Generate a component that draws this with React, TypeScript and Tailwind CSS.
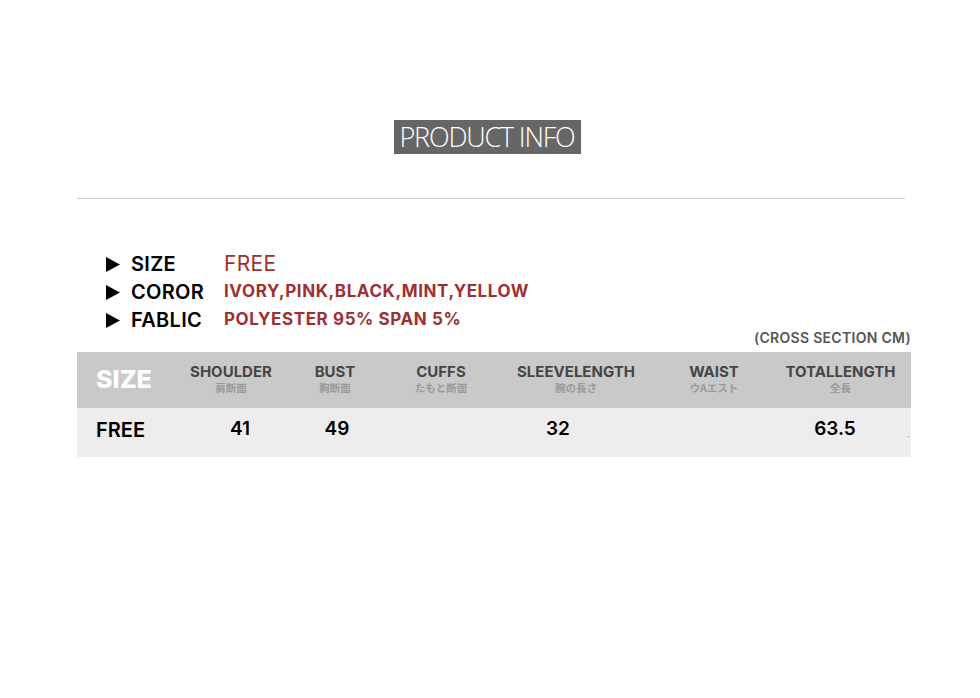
import React from 'react';

const headers = [
  { en: 'SHOULDER', jp: '肩断面', w: 'w-[102px]' },
  { en: 'BUST', jp: '胸断面', w: 'w-[106px]' },
  { en: 'CUFFS', jp: 'たもと断面', w: 'w-[106px]' },
  { en: 'SLEEVELENGTH', jp: '腕の長さ', w: 'w-[164px]' },
  { en: 'WAIST', jp: 'ウAエスト', w: 'w-[112px]' },
  { en: 'TOTALLENGTH', jp: '全長', w: 'w-[141px]' },
];

const Arrow = () => (
  <svg width="14" height="15" viewBox="0 0 14 15" className="shrink-0">
    <polygon points="0,0 14,7.5 0,15" fill="#000" />
  </svg>
);

const InfoRow = ({ label, value, big }: { label: string; value: string; big?: boolean }) => (
  <div className="flex h-[28px] items-center">
    <div className="ml-[29px]">
      <Arrow />
    </div>
    <span className="ml-[11px] w-[93px] text-[20px] font-semibold tracking-[0.3px] text-black">{label}</span>
    <span
      className={
        big
          ? 'text-[21px] font-normal tracking-[0.3px] text-[#9e3032]'
          : 'text-[17px] font-bold tracking-[0.6px] text-[#9e3032]'
      }
    >
      {value}
    </span>
  </div>
);

export default function App() {
  return (
    <div className="min-h-[698px] w-[980px] bg-white pt-[120px] font-['Inter','Noto_Sans',sans-serif]">
      <div className="flex justify-center pr-[6px]">
        <div className="flex h-[34px] w-[187px] items-center justify-center bg-[#666666] font-['Open_Sans',sans-serif] text-[27px] font-light tracking-[-1.2px] text-white">
          PRODUCT INFO
        </div>
      </div>

      <div className="ml-[77px] w-[834px]">
        <div className="mt-[44px] h-px w-[828px] bg-[#cccccc]" />

        <div className="mt-[51px]">
          <InfoRow label="SIZE" value="FREE" big />
          <InfoRow label="COROR" value="IVORY,PINK,BLACK,MINT,YELLOW" />
          <InfoRow label="FABLIC" value="POLYESTER 95% SPAN 5%" />
        </div>

        <div className="-mt-[5px] text-right text-[14px] leading-[18px] font-semibold tracking-[0.3px] text-[#555555]">
          (CROSS SECTION CM)
        </div>

        <div className="mt-[5px]">
          <div className="flex h-[56px] items-center bg-[#c9c9c9]">
            <div className="w-[103px] pl-[19px] text-[25px] font-extrabold text-white">SIZE</div>
            {headers.map((h) => (
              <div key={h.en} className={`${h.w} flex flex-col items-center`}>
                <span className="text-[15px] leading-[16px] font-bold text-[#454545]">{h.en}</span>
                <span className="font-['Noto_Sans_CJK_JP',sans-serif] text-[10.5px] leading-[16px] font-bold text-[#9a9a9a]">
                  {h.jp}
                </span>
              </div>
            ))}
          </div>
          <div className="relative flex h-[49px] items-start bg-[#eeeced] pt-[7px] text-[19px] font-semibold text-black">
            <div className="w-[103px] pl-[19px] text-[20px]">FREE</div>
            <div className="w-[120px] text-center">41</div>
            <div className="w-[74px] text-center">49</div>
            <div className="w-[120px]" />
            <div className="w-[128px] text-center">32</div>
            <div className="w-[148px]" />
            <div className="w-[130px] text-center">63.5</div>
            <span className="absolute right-[2px] top-[28px] h-px w-px bg-[#888]" />
          </div>
        </div>
      </div>
    </div>
  );
}
